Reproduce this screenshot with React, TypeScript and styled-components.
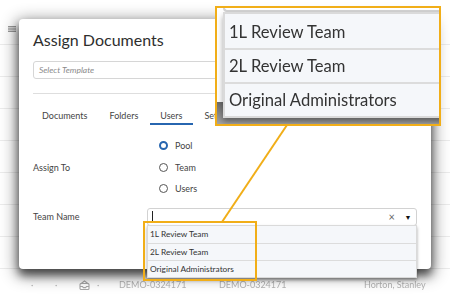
import React from 'react'
import styled, { createGlobalStyle } from 'styled-components'

const GOLD = '#f1ae18'
const BLUE = '#2766b0'

const GlobalStyle = createGlobalStyle`
  html, body {
    margin: 0;
    padding: 0;
    background: #fff;
  }
  body {
    font-family: Lato, 'Liberation Sans', sans-serif;
    color: #333;
  }
`

const Page = styled.div`
  position: relative;
  width: 450px;
  height: 298px;
  overflow: hidden;
  background: #fff;
`

/* faded table behind the modal */
const Table = styled.div`
  display: flex;
  flex-direction: column;
  padding-top: 13px;
`

const TableRow = styled.div<{ $pad?: number }>`
  height: 32px;
  box-sizing: border-box;
  border-bottom: 1px solid #ececec;
  display: flex;
  align-items: center;
  padding-left: ${(p) => p.$pad ?? 0}px;
  font-size: 9px;
  color: #b4b4b4;
  filter: blur(0.3px);
`

const Cell = styled.div<{ $w?: number }>`
  width: ${(p) => (p.$w ? `${p.$w}px` : 'auto')};
  flex-shrink: 0;
  display: flex;
  align-items: center;
`

/* modal */
const Dialog = styled.div`
  position: absolute;
  left: 19px;
  top: 19px;
  width: 412px;
  height: 250px;
  box-sizing: border-box;
  padding: 10px 14px;
  background: #fff;
  border-radius: 4px;
  box-shadow: 0 6px 8px rgba(0, 0, 0, 0.55), 0 4px 16px 3px rgba(0, 0, 0, 0.45);
`

const Title = styled.h1`
  margin: 0;
  font-size: 16px;
  line-height: 22px;
  font-weight: 400;
  color: #2e2e2e;
`

const TemplateInput = styled.div`
  margin-top: 10px;
  height: 18px;
  box-sizing: border-box;
  border: 1px solid #d6d6d6;
  border-radius: 3px;
  padding: 0 5px;
  display: flex;
  align-items: center;
  font-size: 8.5px;
  font-style: italic;
  color: #8a8a8a;
`

const Divider = styled.hr`
  margin: 14px 0 0;
  border: 0;
  border-top: 1px solid #dedede;
`

const Tabs = styled.div`
  display: flex;
  gap: 2px;
  margin-top: 11px;
  margin-left: -1px;
`

const Tab = styled.div<{ $active?: boolean }>`
  padding: 5px 10px 1px;
  font-size: 9px;
  line-height: 12px;
  color: #444;
  border-bottom: 2px solid ${(p) => (p.$active ? BLUE : 'transparent')};
`

const Form = styled.div`
  margin-top: 10px;
  display: grid;
  grid-template-columns: 114px 1fr;
  row-gap: 8px;
`

const FieldLabel = styled.div`
  align-self: center;
  font-size: 9px;
  color: #444;
`

const RadioGroup = styled.div`
  display: flex;
  flex-direction: column;
  padding-left: 12px;
`

const RadioRow = styled.label`
  height: 21.5px;
  display: flex;
  align-items: center;
  gap: 7px;
  font-size: 9px;
  color: #444;
`

const RadioDot = styled.span<{ $checked?: boolean }>`
  width: 9px;
  height: 9px;
  box-sizing: border-box;
  border-radius: 50%;
  border: ${(p) => (p.$checked ? `2.6px solid ${BLUE}` : '1px solid #555')};
  background: #fff;
`

const Select = styled.div`
  position: relative;
  height: 18px;
  box-sizing: border-box;
  border: 1px solid #d2d2d2;
  border-radius: 3px;
  display: flex;
  align-items: center;
  padding-left: 4px;
`

const Caret = styled.span`
  width: 1px;
  height: 11px;
  background: #222;
`

const ClearX = styled.span`
  margin-left: auto;
  font-size: 11px;
  line-height: 1;
  color: #666;
`

const Arrow = styled.span`
  width: 16px;
  display: flex;
  justify-content: center;
  margin-left: 5px;
  font-size: 7px;
  color: #111;
`

const DropdownPanel = styled.div`
  position: absolute;
  top: 100%;
  left: -1px;
  right: -1px;
  z-index: 2;
`

const OptionList = styled.div<{ $width?: number }>`
  ${(p) => (p.$width ? `width: ${p.$width}px;` : '')}
  border: 1px solid #dadada;
  background: #f5f7fa;
  box-shadow: 0 2px 3px rgba(0, 0, 0, 0.35);
`

const Option = styled.div`
  height: 17px;
  box-sizing: border-box;
  display: flex;
  align-items: center;
  padding-left: 2px;
  font-size: 8.3px;
  color: #333;
  white-space: nowrap;
  & + & {
    border-top: 1px solid #dcdcdc;
  }
`

/* annotation overlays */
const Highlight = styled.div`
  position: absolute;
  left: 143px;
  top: 221px;
  width: 114px;
  height: 60px;
  box-sizing: border-box;
  border: 2px solid ${GOLD};
  z-index: 3;
`

const Connector = styled.svg`
  position: absolute;
  left: 0;
  top: 0;
  z-index: 3;
  pointer-events: none;
`

const Lens = styled.div`
  position: absolute;
  left: 215px;
  top: 6px;
  width: 226px;
  height: 120px;
  box-sizing: border-box;
  border: 2px solid ${GOLD};
  overflow: hidden;
  z-index: 4;
  background: #fff;
`

const LensScene = styled.div`
  width: 111px;
  height: 58px;
  transform: scale(2);
  transform-origin: 0 0;
  display: flex;
  flex-direction: column;
  background: linear-gradient(#fff 0 47px, #6a6a6a 47px, #a4a4a4 58px);
`

const InputStub = styled.div`
  margin-left: 3px;
  width: 300px;
  height: 2px;
  box-sizing: border-box;
  border-left: 1px solid #d2d2d2;
  border-bottom: 1px solid #d2d2d2;
  border-bottom-left-radius: 2px;
  background: #fff;
`

const LensList = styled.div`
  margin-left: 3px;
`

const teams = ['1L Review Team', '2L Review Team', 'Original Administrators']

const TeamOptions: React.FC<{ width?: number }> = ({ width }) => (
  <OptionList $width={width}>
    {teams.map((t) => (
      <Option key={t}>{t}</Option>
    ))}
  </OptionList>
)

const TrayIcon = () => (
  <svg width="11" height="10" viewBox="0 0 11 10" fill="none" stroke="#a8a8a8" strokeWidth="1.1">
    <rect x="1" y="3.5" width="9" height="6" rx="1" />
    <path d="M1.5 4 L5.5 1 L9.5 4" />
    <path d="M1 6.5 H3.5 L4.3 7.6 H6.7 L7.5 6.5 H10" />
  </svg>
)

const GridIcon = () => (
  <svg width="8" height="6" viewBox="0 0 8 6" fill="#9a9a9a">
    <rect x="0" y="0" width="8" height="1.4" />
    <rect x="0" y="2.3" width="8" height="1.4" />
    <rect x="0" y="4.6" width="8" height="1.4" />
  </svg>
)

const Background = () => (
  <Table>
    <TableRow $pad={8}>
      <GridIcon />
    </TableRow>
    {Array.from({ length: 7 }).map((_, i) => (
      <TableRow key={i} />
    ))}
    <TableRow $pad={31}>
      <Cell $w={24}>·</Cell>
      <Cell $w={24}>·</Cell>
      <Cell $w={18}>
        <TrayIcon />
      </Cell>
      <Cell $w={22}>·</Cell>
      <Cell $w={100}>DEMO-0324171</Cell>
      <Cell $w={145}>DEMO-0324171</Cell>
      <Cell>Horton, Stanley</Cell>
    </TableRow>
  </Table>
)

const AssignDialog = () => (
  <Dialog>
    <Title>Assign Documents</Title>
    <TemplateInput>Select Template</TemplateInput>
    <Divider />
    <Tabs>
      <Tab>Documents</Tab>
      <Tab>Folders</Tab>
      <Tab $active>Users</Tab>
      <Tab>Settings</Tab>
    </Tabs>
    <Form>
      <FieldLabel>Assign To</FieldLabel>
      <RadioGroup>
        <RadioRow>
          <RadioDot $checked />
          Pool
        </RadioRow>
        <RadioRow>
          <RadioDot />
          Team
        </RadioRow>
        <RadioRow>
          <RadioDot />
          Users
        </RadioRow>
      </RadioGroup>
      <FieldLabel>Team Name</FieldLabel>
      <Select>
        <Caret />
        <ClearX>×</ClearX>
        <Arrow>▼</Arrow>
        <DropdownPanel>
          <TeamOptions />
        </DropdownPanel>
      </Select>
    </Form>
  </Dialog>
)

const App = () => (
  <>
    <GlobalStyle />
    <Page>
      <Background />
      <AssignDialog />
      <Highlight />
      <Connector width="450" height="298" viewBox="0 0 450 298">
        <line x1="287" y1="125" x2="222" y2="222" stroke={GOLD} strokeWidth="2" />
      </Connector>
      <Lens>
        <LensScene>
          <InputStub />
          <LensList>
            <TeamOptions width={300} />
          </LensList>
        </LensScene>
      </Lens>
    </Page>
  </>
)

export default App
